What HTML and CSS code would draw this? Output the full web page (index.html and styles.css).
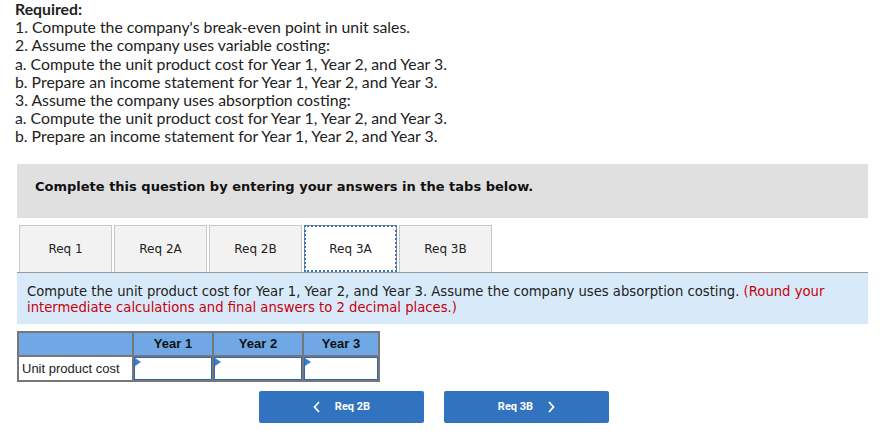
FILE: index.html
```html
<!DOCTYPE html>
<html>
<head>
<meta charset="utf-8">
<link rel="stylesheet" href="styles.css">
</head>
<body>
<div class="required">
  <div class="req-title">Required:</div>
  <div>1. Compute the company's break-even point in unit sales.</div>
  <div>2. Assume the company uses variable costing:</div>
  <div>a. Compute the unit product cost for Year 1, Year 2, and Year 3.</div>
  <div>b. Prepare an income statement for Year 1, Year 2, and Year 3.</div>
  <div>3. Assume the company uses absorption costing:</div>
  <div>a. Compute the unit product cost for Year 1, Year 2, and Year 3.</div>
  <div>b. Prepare an income statement for Year 1, Year 2, and Year 3.</div>
</div>
<div class="panel">
  <div class="banner">Complete this question by entering your answers in the tabs below.</div>
  <div class="tabs">
    <div class="tab">Req 1</div>
    <div class="tab">Req 2A</div>
    <div class="tab">Req 2B</div>
    <div class="tab active">Req 3A</div>
    <div class="tab">Req 3B</div>
  </div>
  <div class="instructions">Compute the unit product cost for Year 1, Year 2, and Year 3. Assume the company uses absorption costing. <span class="red">(Round your intermediate calculations and final answers to 2 decimal places.)</span></div>
  <table class="grid">
    <tr class="head"><th class="blank"></th><th class="c1">Year 1</th><th class="c2">Year 2</th><th class="c3">Year 3</th></tr>
    <tr><td class="label">Unit product cost</td><td class="input"><span class="flag"></span></td><td class="input"><span class="flag"></span></td><td class="input"><span class="flag"></span></td></tr>
  </table>
  <div class="nav">
    <div class="btn"><svg class="chev" width="8" height="12" viewBox="0 0 8 12"><polyline points="6,1 1.5,6 6,11" fill="none" stroke="#fff" stroke-width="1.8"/></svg><span>Req 2B</span></div>
    <div class="btn"><span>Req 3B</span><svg class="chev" width="8" height="12" viewBox="0 0 8 12"><polyline points="2,1 6.5,6 2,11" fill="none" stroke="#fff" stroke-width="1.8"/></svg></div>
  </div>
</div>
</body>
</html>
```
FILE: styles.css
```css
html, body { margin: 0; padding: 0; background: #fff; }
body { width: 889px; height: 434px; overflow: hidden; }
.required {
  font-family: "Lato", "Open Sans", sans-serif;
  font-size: 15.8px;
  line-height: 18.2px;
  color: #222;
  padding-left: 15px;
}
.req-title { font-weight: bold; }
.panel { margin-left: 17px; width: 851px; margin-top: 18px; }
.banner {
  background: #e0e0e0;
  height: 54px;
  box-sizing: border-box;
  padding: 15px 0 0 18px;
  font-family: "DejaVu Sans", Verdana, sans-serif;
  font-weight: bold;
  font-size: 13px;
  color: #111;
}
.tabs {
  display: flex;
  gap: 2px;
  padding-left: 2px;
  margin-top: 7px;
  border-bottom: 1px solid #999;
}
.tab {
  width: 93px;
  height: 47px;
  box-sizing: border-box;
  border: 1px solid #c8c8c8;
  border-bottom: none;
  background: #f2f2f2;
  font-family: "DejaVu Sans", Verdana, sans-serif;
  font-size: 12px;
  color: #222;
  display: flex;
  align-items: center;
  justify-content: center;
}
.tab.active {
  background: #fff;
  border-color: #888;
  outline: 2px dotted #3874c8;
  outline-offset: -2px;
}
.instructions {
  background: #d8eaf9;
  height: 51px;
  box-sizing: border-box;
  padding: 11px 10px 0 10px;
  font-family: "DejaVu Sans", Verdana, sans-serif;
  font-size: 13.2px;
  line-height: 16px;
  color: #222;
}
.red { color: #c8000a; }
.grid {
  border-collapse: collapse;
  margin-top: 7px;
  font-family: "Liberation Sans", Arial, sans-serif;
  font-size: 13px;
}
.grid th, .grid td { border: 2px solid #777; padding: 0; }
.grid .head th {
  background: #6fa8e4;
  height: 22px;
  font-weight: bold;
  color: #111;
}
.grid .blank { width: 113px; }
.grid .c1 { width: 78px; }
.grid .c2 { width: 88px; }
.grid .c3 { width: 74px; }
.grid .label { height: 23px; padding-left: 3px; color: #222; }
.grid .input { position: relative; background: #fff; box-shadow: inset 0 0 0 1px #2d66b4; }
.flag {
  position: absolute;
  left: 1px; top: 1px;
  width: 0; height: 0;
  border-top: 4px solid transparent;
  border-bottom: 4px solid transparent;
  border-left: 6px solid #3a7fd5;
}
.nav { display: flex; gap: 20px; margin-left: 242px; margin-top: 9px; }
.btn {
  width: 165px;
  height: 32px;
  background: #3273bf;
  border-radius: 2px;
  color: #fff;
  font-family: "Roboto", "Inter", sans-serif;
  font-weight: bold;
  font-size: 11px;
  display: flex;
  align-items: center;
  justify-content: center;
  gap: 14px;
}
.chev { display: block; }
```
